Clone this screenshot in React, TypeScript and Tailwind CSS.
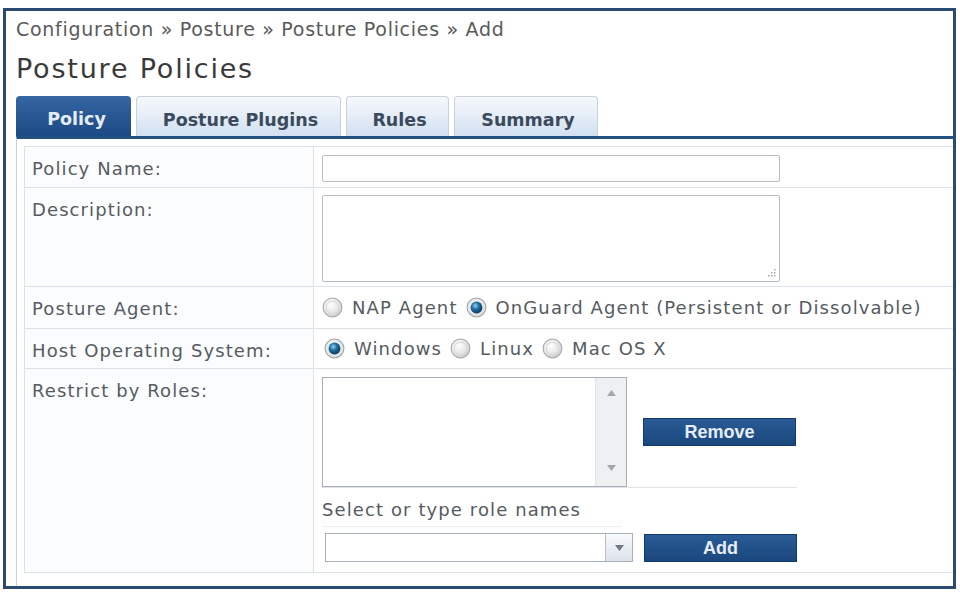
import { useId } from "react";

const TABS = [
  { label: "Policy", w: "w-[115px]", active: true },
  { label: "Posture Plugins", w: "w-[205px]", active: false },
  { label: "Rules", w: "w-[103px]", active: false },
  { label: "Summary", w: "w-[144px]", active: false },
];

function Radio({ checked }: { checked?: boolean }) {
  const id = useId();
  if (checked) {
    return (
      <svg width="21" height="21" viewBox="0 0 20 20" className="shrink-0">
        <defs>
          <radialGradient id={id + "o"} cx="45%" cy="40%" r="65%">
            <stop offset="0" stopColor="#ffffff" />
            <stop offset="1" stopColor="#d4d7da" />
          </radialGradient>
          <radialGradient id={id + "i"} cx="40%" cy="35%" r="70%">
            <stop offset="0" stopColor="#8fd0f0" />
            <stop offset="0.45" stopColor="#1f6d9e" />
            <stop offset="1" stopColor="#0a3658" />
          </radialGradient>
        </defs>
        <circle cx="10" cy="10" r="9" fill={`url(#${id}o)`} stroke="#9ea3a8" />
        <circle cx="10" cy="10" r="5.6" fill={`url(#${id}i)`} />
      </svg>
    );
  }
  return (
    <svg width="21" height="21" viewBox="0 0 20 20" className="shrink-0">
      <defs>
        <radialGradient id={id} cx="40%" cy="35%" r="70%">
          <stop offset="0" stopColor="#ffffff" />
          <stop offset="0.6" stopColor="#e6e6e6" />
          <stop offset="1" stopColor="#c4c4c4" />
        </radialGradient>
      </defs>
      <circle cx="10" cy="10" r="9" fill={`url(#${id})`} stroke="#a9a9a9" />
      <circle cx="10" cy="10" r="6" fill="none" stroke="#d9d9d9" />
    </svg>
  );
}

function Row({ label, h, children }: { label: string; h: string; children?: React.ReactNode }) {
  return (
    <div className={`flex ${h} border-b border-[#dde2e8]`}>
      <div className="w-[289px] shrink-0 border-r border-[#dde2e8] bg-[#fafcfd] pl-[7px] pt-[11px] leading-[22px]">
        {label}
      </div>
      <div className="flex-1 pl-[8px]">{children}</div>
    </div>
  );
}

function BlueButton({ label }: { label: string }) {
  return (
    <button className="h-[28px] w-[153px] border border-[#123a68] bg-gradient-to-b from-[#2a5b94] to-[#1a477e] font-['Liberation_Sans',Arial,sans-serif] text-[18px] font-bold tracking-normal text-[#e6edf6]">
      {label}
    </button>
  );
}

export default function App() {
  return (
    <div className="h-[592px] w-[960px] bg-white pl-[3px] pt-[8px] font-['DejaVu_Sans',Verdana,sans-serif]">
      <div className="flex h-[581px] w-[953px] flex-col border-[3px] border-[#2b4b73] pl-[10px]">
        <div className="mt-[6px] h-[24px] text-[19px] leading-[24px] tracking-[0.7px] text-[#5a5a5a]">
          Configuration » Posture » Posture Policies » Add
        </div>
        <div className="mt-[12px] h-[32px] text-[27px] leading-[32px] tracking-[1.8px] text-[#3a3a3a]">
          Posture Policies
        </div>

        {/* tabs */}
        <div className="mt-[10px] flex h-[41px] items-end gap-[5px]">
          {TABS.map((t) =>
            t.active ? (
              <div
                key={t.label}
                className={`${t.w} flex h-[40px] justify-center rounded-t-[4px] bg-gradient-to-b from-[#3566a2] to-[#1b4a84] pl-[6px] pt-[12px] text-[17.5px] leading-[22px] font-bold text-[#e4ecf6]`}
              >
                {t.label}
              </div>
            ) : (
              <div
                key={t.label}
                className={`${t.w} flex h-[40px] justify-center rounded-t-[4px] border border-b-0 border-[#c9d3de] bg-gradient-to-b from-[#f6f9fc] to-[#d2e1f2] pl-[4px] pt-[12px] text-[17.5px] leading-[22px] font-bold text-[#3b4a5c]`}
              >
                {t.label}
              </div>
            ),
          )}
        </div>

        {/* panel */}
        <div className="flex-1 border-t-[3px] border-l border-t-[#22507f] border-l-[#c9d0d8] pl-[7px] pt-[7px]">
          <div className="border-t border-l border-[#dde2e8] text-[18px] tracking-[1.1px] text-[#565b61]">
            <Row label="Policy Name:" h="h-[41px]">
              <input className="mt-[8px] h-[27px] w-[458px] rounded-[2px] border border-[#b9bdc3] bg-white" />
            </Row>
            <Row label="Description:" h="h-[99px]">
              <div className="relative mt-[7px] h-[87px] w-[458px] rounded-[2px] border border-[#b9bdc3] bg-white">
                <svg width="10" height="10" viewBox="0 0 10 10" className="absolute bottom-[4px] right-[3px]">
                  <g fill="#a8adb3">
                    <rect x="8" y="2" width="1.5" height="1.5" />
                    <rect x="5" y="5" width="1.5" height="1.5" />
                    <rect x="8" y="5" width="1.5" height="1.5" />
                    <rect x="2" y="8" width="1.5" height="1.5" />
                    <rect x="5" y="8" width="1.5" height="1.5" />
                    <rect x="8" y="8" width="1.5" height="1.5" />
                  </g>
                </svg>
              </div>
            </Row>
            <Row label="Posture Agent:" h="h-[42px]">
              <div className="flex h-full items-center leading-[22px]">
                <Radio />
                <span className="ml-[9px]">NAP Agent</span>
                <span className="ml-[8px]">
                  <Radio checked />
                </span>
                <span className="ml-[9px]">OnGuard Agent (Persistent or Dissolvable)</span>
              </div>
            </Row>
            <Row label="Host Operating System:" h="h-[40px]">
              <div className="flex h-full items-center leading-[22px]">
                <span className="ml-[2px]">
                  <Radio checked />
                </span>
                <span className="ml-[9px]">Windows</span>
                <span className="ml-[8px]">
                  <Radio />
                </span>
                <span className="ml-[9px]">Linux</span>
                <span className="ml-[8px]">
                  <Radio />
                </span>
                <span className="ml-[9px]">Mac OS X</span>
              </div>
            </Row>
            <Row label="Restrict by Roles:" h="h-[204px]">
              <div className="w-[475px] pt-[8px]">
                <div className="flex items-center gap-[16px] border-b border-[#dfe3e8]">
                  <div className="flex h-[110px] w-[305px] border border-[#a9afb6] bg-white">
                    <div className="flex-1" />
                    <div className="flex w-[31px] flex-col items-center justify-between border-l border-[#e3e5e8] bg-[#eff0f2] pb-[15px] pt-[12px]">
                      <svg width="9" height="6" viewBox="0 0 9 6">
                        <path d="M0 6 L4.5 0 L9 6 Z" fill="#a2a7ad" />
                      </svg>
                      <svg width="9" height="6" viewBox="0 0 9 6">
                        <path d="M0 0 L9 0 L4.5 6 Z" fill="#a2a7ad" />
                      </svg>
                    </div>
                  </div>
                  <BlueButton label="Remove" />
                </div>
                <div className="w-[300px] border-b border-[#eef1f4] pb-[5px] pt-[11px] leading-[22px]">
                  Select or type role names
                </div>
                <div className="flex items-center gap-[11px] pl-[3px] pt-[6px]">
                  <div className="flex h-[29px] w-[308px] border border-[#a9b1bb] bg-white">
                    <div className="flex-1" />
                    <div className="flex w-[27px] items-center justify-center border-l border-[#b8c0c9] bg-gradient-to-b from-[#f7f9fb] to-[#dde3ea]">
                      <svg width="9" height="6" viewBox="0 0 9 6">
                        <path d="M0 0 L9 0 L4.5 6 Z" fill="#6e7884" />
                      </svg>
                    </div>
                  </div>
                  <BlueButton label="Add" />
                </div>
              </div>
            </Row>
          </div>
        </div>
      </div>
    </div>
  );
}
